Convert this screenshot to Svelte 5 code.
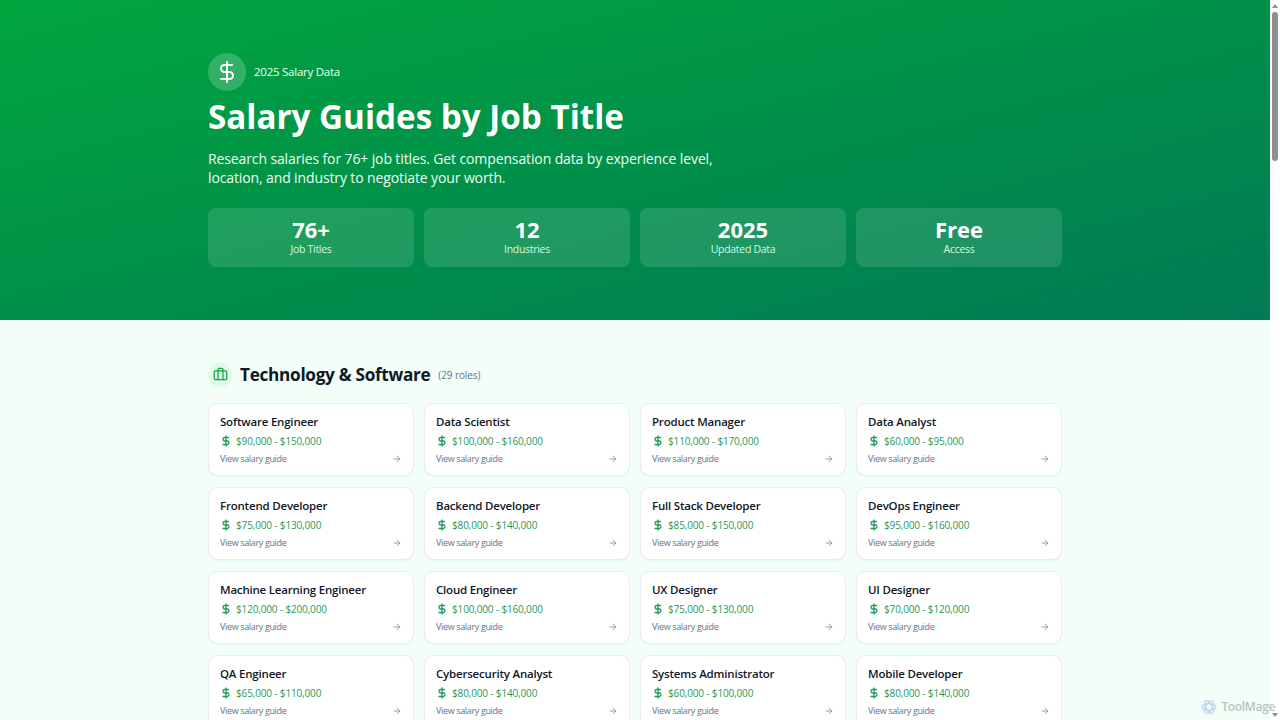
<script lang="ts">
  const stats = [
    { value: "76+", label: "Job Titles" },
    { value: "12", label: "Industries" },
    { value: "2025", label: "Updated Data" },
    { value: "Free", label: "Access" },
  ];

  const roles = [
    { title: "Software Engineer", range: "$90,000 - $150,000" },
    { title: "Data Scientist", range: "$100,000 - $160,000" },
    { title: "Product Manager", range: "$110,000 - $170,000" },
    { title: "Data Analyst", range: "$60,000 - $95,000" },
    { title: "Frontend Developer", range: "$75,000 - $130,000" },
    { title: "Backend Developer", range: "$80,000 - $140,000" },
    { title: "Full Stack Developer", range: "$85,000 - $150,000" },
    { title: "DevOps Engineer", range: "$95,000 - $160,000" },
    { title: "Machine Learning Engineer", range: "$120,000 - $200,000" },
    { title: "Cloud Engineer", range: "$100,000 - $160,000" },
    { title: "UX Designer", range: "$75,000 - $130,000" },
    { title: "UI Designer", range: "$70,000 - $120,000" },
    { title: "QA Engineer", range: "$65,000 - $110,000" },
    { title: "Cybersecurity Analyst", range: "$80,000 - $140,000" },
    { title: "Systems Administrator", range: "$60,000 - $100,000" },
    { title: "Mobile Developer", range: "$80,000 - $140,000" },
  ];
</script>

<div class="window">
  <main class="page">
    <header class="hero">
      <div class="container">
        <div class="eyebrow">
          <span class="eyebrow-icon">
            <svg width="24" height="24" viewBox="0 0 24 24" fill="none" stroke="currentColor" stroke-width="2" stroke-linecap="round" stroke-linejoin="round">
              <line x1="12" x2="12" y1="2" y2="22" />
              <path d="M17 5H9.5a3.5 3.5 0 0 0 0 7h5a3.5 3.5 0 0 1 0 7H6" />
            </svg>
          </span>
          <span class="eyebrow-text">2025 Salary Data</span>
        </div>
        <h1>Salary Guides by Job Title</h1>
        <p class="lead">
          Research salaries for 76+ job titles. Get compensation data by experience level,
          location, and industry to negotiate your worth.
        </p>
        <div class="stats">
          {#each stats as stat}
            <div class="stat">
              <div class="stat-value">{stat.value}</div>
              <div class="stat-label">{stat.label}</div>
            </div>
          {/each}
        </div>
      </div>
    </header>

    <section class="listing">
      <div class="container">
        <div class="section-head">
          <span class="section-icon">
            <svg width="15" height="15" viewBox="0 0 24 24" fill="none" stroke="currentColor" stroke-width="2" stroke-linecap="round" stroke-linejoin="round">
              <path d="M16 20V4a2 2 0 0 0-2-2h-4a2 2 0 0 0-2 2v16" />
              <rect width="20" height="14" x="2" y="6" rx="2" />
            </svg>
          </span>
          <h2>Technology &amp; Software</h2>
          <span class="count">(29 roles)</span>
        </div>
        <div class="grid">
          {#each roles as role}
            <a class="card" href="#top">
              <div class="card-title">{role.title}</div>
              <div class="card-range">
                <svg width="12" height="12" viewBox="0 0 24 24" fill="none" stroke="currentColor" stroke-width="2.6" stroke-linecap="round" stroke-linejoin="round">
                  <line x1="12" x2="12" y1="2" y2="22" />
                  <path d="M17 5H9.5a3.5 3.5 0 0 0 0 7h5a3.5 3.5 0 0 1 0 7H6" />
                </svg>
                <span>{role.range}</span>
              </div>
              <div class="card-foot">
                <span>View salary guide</span>
                <svg width="10" height="10" viewBox="0 0 24 24" fill="none" stroke="currentColor" stroke-width="2" stroke-linecap="round" stroke-linejoin="round">
                  <path d="M5 12h14" />
                  <path d="m12 5 7 7-7 7" />
                </svg>
              </div>
            </a>
          {/each}
        </div>
      </div>
    </section>
  </main>

  <div class="scrollbar" aria-hidden="true">
    <span class="arrow up"></span>
    <span class="thumb"></span>
    <span class="arrow down"></span>
  </div>

  <div class="watermark">
    <svg width="16" height="16" viewBox="0 0 24 24" fill="none" stroke="#bcd3f2" stroke-width="1.8">
      <ellipse cx="12" cy="12" rx="10.5" ry="5" />
      <ellipse cx="12" cy="12" rx="10.5" ry="5" transform="rotate(60 12 12)" />
      <ellipse cx="12" cy="12" rx="10.5" ry="5" transform="rotate(120 12 12)" />
    </svg>
    <span>ToolMage</span>
  </div>
</div>

<style>
  :global(body) {
    margin: 0;
    font-family: "Open Sans", "Noto Sans", sans-serif;
  }

  .window {
    position: relative;
    display: flex;
    height: 100vh;
    overflow: hidden;
    background: #fff;
  }

  .page {
    flex: 1;
    min-width: 0;
    overflow: hidden;
    background: #f2fef7;
  }

  .container {
    width: 854px;
    margin: 0 auto;
  }

  .hero {
    height: 320px;
    box-sizing: border-box;
    padding-top: 53px;
    color: #fff;
    background: linear-gradient(to bottom right, #00a63e 0%, #007a55 100%);
  }

  .eyebrow {
    display: flex;
    align-items: center;
    gap: 8px;
  }

  .eyebrow-icon {
    display: flex;
    align-items: center;
    justify-content: center;
    width: 38px;
    height: 38px;
    border-radius: 50%;
    background: rgba(255, 255, 255, 0.2);
  }

  .eyebrow-text {
    margin-top: -1px;
    font-size: 11.5px;
    letter-spacing: -0.25px;
    color: #ecfdf5;
  }

  h1 {
    margin: 5px 0 0;
    font-size: 33.2px;
    line-height: 42px;
    font-weight: 700;
  }

  .lead {
    margin: 11px 0 0;
    max-width: 560px;
    font-size: 14px;
    line-height: 19px;
    letter-spacing: -0.12px;
    color: #ecfdf5;
  }

  .stats {
    display: grid;
    grid-template-columns: repeat(4, 1fr);
    gap: 10px;
    margin-top: 21px;
  }

  .stat {
    height: 59px;
    box-sizing: border-box;
    padding-top: 9px;
    border-radius: 8px;
    text-align: center;
    background: rgba(255, 255, 255, 0.12);
  }

  .stat-value {
    font-size: 22px;
    line-height: 25px;
    font-weight: 700;
  }

  .stat-label {
    margin-top: 1px;
    font-size: 10.5px;
    line-height: 13px;
    letter-spacing: -0.3px;
    color: #d0fae5;
  }

  .listing {
    padding-top: 42px;
  }

  .section-head {
    display: flex;
    align-items: center;
    height: 25px;
  }

  .section-icon {
    display: flex;
    align-items: center;
    justify-content: center;
    width: 24px;
    height: 24px;
    margin-right: 8px;
    border-radius: 50%;
    color: #16a34a;
    background: #dcfce7;
  }

  h2 {
    margin: -1px 0 0;
    font-size: 17.2px;
    letter-spacing: -0.3px;
    font-weight: 700;
    color: #101828;
  }

  .count {
    margin-left: 8px;
    font-size: 10px;
    letter-spacing: -0.1px;
    color: #6a7282;
  }

  .grid {
    display: grid;
    grid-template-columns: repeat(4, 1fr);
    gap: 11px 10px;
    margin-top: 16px;
  }

  .card {
    display: block;
    height: 73px;
    box-sizing: border-box;
    padding: 10px 11px;
    border: 1px solid #e8eceb;
    border-radius: 10px;
    background: #fff;
    box-shadow: 0 1px 2px rgba(0, 0, 0, 0.04);
    text-decoration: none;
  }

  .card-title {
    font-size: 11.5px;
    line-height: 16px;
    letter-spacing: -0.2px;
    font-weight: 600;
    color: #101828;
  }

  .card-range {
    display: flex;
    align-items: center;
    gap: 4px;
    margin-top: 4px;
    font-size: 10px;
    line-height: 14px;
    letter-spacing: -0.15px;
    color: #1f9a5c;
  }

  .card-foot {
    display: flex;
    align-items: center;
    justify-content: space-between;
    margin-top: 5px;
    font-size: 9px;
    line-height: 12px;
    letter-spacing: -0.35px;
    color: #6a7282;
  }

  .card-foot svg {
    color: #838a96;
  }

  .scrollbar {
    position: relative;
    flex: 0 0 10px;
    background: #fff;
  }

  .thumb {
    position: absolute;
    top: 12px;
    left: 2px;
    width: 6px;
    height: 149px;
    border-radius: 3px;
    background: #8f8f8f;
  }

  .arrow {
    position: absolute;
    left: 2px;
    width: 0;
    height: 0;
    border-left: 3px solid transparent;
    border-right: 3px solid transparent;
  }

  .arrow.up {
    top: 4px;
    border-bottom: 4px solid #8f8f8f;
  }

  .arrow.down {
    bottom: 3px;
    border-top: 4px solid #8f8f8f;
  }

  .watermark {
    position: absolute;
    right: 5px;
    bottom: 5px;
    display: flex;
    align-items: center;
    gap: 4px;
    font-size: 12px;
    letter-spacing: -0.35px;
    font-weight: 600;
    color: #bcc1c3;
  }
</style>
